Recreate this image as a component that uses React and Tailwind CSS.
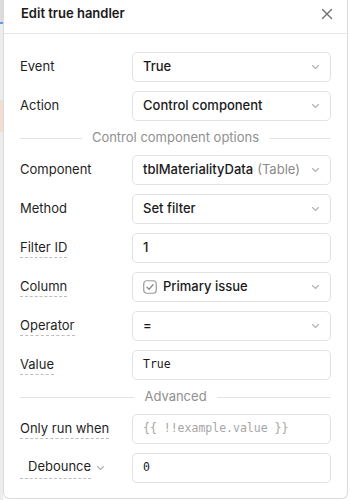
const font = { fontFamily: 'Inter, "Noto Sans", sans-serif' };

function Chevron({ className = '' }) {
  return (
    <svg width="9" height="6" viewBox="0 0 9 6" className={className}>
      <path d="M1.5 1.5 L4.5 4.5 L7.5 1.5" fill="none" stroke="#b3b3b3" strokeWidth="1.1" strokeLinecap="round" strokeLinejoin="round" />
    </svg>
  );
}

function Label({ children, dashed }) {
  return (
    <div className="w-[112px] shrink-0 text-[13px] text-[#1f1f1f]">
      <span className={dashed ? 'border-b border-dashed border-[#bdbdbd] pb-[2px]' : ''}>{children}</span>
    </div>
  );
}

function Select({ children }) {
  return (
    <div className="flex-1 h-[30px] flex items-center justify-between pl-[10px] pr-[10px] rounded-[5px] border border-[#e2e2e2] bg-white text-[13px] font-medium text-[#1a1a1a]">
      <div className="flex items-center whitespace-nowrap">{children}</div>
      <Chevron />
    </div>
  );
}

function Input({ children, mono, placeholder }) {
  return (
    <div
      className={
        'flex-1 h-[30px] flex items-center pl-[10px] rounded-[5px] border border-[#e2e2e2] bg-white ' +
        (mono ? 'text-[11.5px] ' : 'text-[13px] font-medium ') +
        (placeholder ? 'text-[#a6a6a6]' : 'text-[#1a1a1a]')
      }
      style={mono ? { fontFamily: '"DejaVu Sans Mono", monospace' } : undefined}
    >
      {children}
    </div>
  );
}

function Row({ label, dashed, children }) {
  return (
    <div className="flex items-center">
      <Label dashed={dashed}>{label}</Label>
      {children}
    </div>
  );
}

function Divider({ text }) {
  return (
    <div className="h-[16px] flex items-center gap-[10px]">
      <div className="flex-1 h-px bg-[#e3e3e3]" />
      <span className="text-[13px] text-[#8f8f8f]">{text}</span>
      <div className="flex-1 h-px bg-[#e3e3e3]" />
    </div>
  );
}

export default function App() {
  return (
    <div className="w-[350px] h-[500px] flex bg-white overflow-hidden" style={font}>
      <div className="w-[3px] shrink-0 flex flex-col bg-[#ededed]">
        <div className="h-[22px] bg-[#dcdcdc]" />
        <div className="h-[2px] bg-[#5b9bf0]" />
        <div className="h-[76px]" />
        <div className="h-[32px] bg-[#f3ddd0]" />
        <div className="flex-1" />
      </div>
      <div className="w-[345px] shrink-0 h-[499px] flex flex-col bg-white border-l border-r border-b border-[#dadada] rounded-b-[6px]">
        <div className="h-[34px] flex items-center justify-between pl-[17px] pr-[14px] pb-[5px] border-b border-[#e6e6e6]">
          <span className="text-[13px] font-semibold text-[#1a1a1a]">Edit true handler</span>
          <svg width="12" height="12" viewBox="0 0 12 12">
            <path d="M1.5 1.5 L10.5 10.5 M10.5 1.5 L1.5 10.5" stroke="#6f6f6f" strokeWidth="1.4" strokeLinecap="round" />
          </svg>
        </div>
        <div className="flex flex-col gap-[9px] pt-[18px] px-[16px]">
          <Row label="Event">
            <Select>True</Select>
          </Row>
          <Row label="Action">
            <Select>Control component</Select>
          </Row>
          <Divider text="Control component options" />
          <Row label="Component">
            <Select>
              tblMaterialityData<span className="ml-[4px] font-normal text-[#8a8a8a]">(Table)</span>
            </Select>
          </Row>
          <Row label="Method">
            <Select>Set filter</Select>
          </Row>
          <Row label="Filter ID" dashed>
            <Input>1</Input>
          </Row>
          <Row label="Column" dashed>
            <Select>
              <svg width="14" height="14" viewBox="0 0 14 14" className="mr-[6px]">
                <rect x="0.75" y="0.75" width="12.5" height="12.5" rx="3" fill="white" stroke="#9a9a9a" strokeWidth="1.2" />
                <path d="M4 7.2 L6.1 9.2 L10 4.8" fill="none" stroke="#8a8a8a" strokeWidth="1.3" strokeLinecap="round" strokeLinejoin="round" />
              </svg>
              Primary issue
            </Select>
          </Row>
          <Row label="Operator" dashed>
            <Select>=</Select>
          </Row>
          <Row label="Value" dashed>
            <Input mono>True</Input>
          </Row>
          <Divider text="Advanced" />
          <Row label="Only run when" dashed>
            <Input mono placeholder>{'{{ !!example.value }}'}</Input>
          </Row>
          <div className="flex items-center">
            <div className="w-[112px] shrink-0 flex items-center text-[13px] text-[#1f1f1f]">
              <span className="pl-[8px] border-b border-dashed border-[#bdbdbd] pb-[2px]">Debounce</span>
              <Chevron className="ml-[5px]" />
            </div>
            <Input mono>0</Input>
          </div>
        </div>
      </div>
      <div className="flex-1 bg-white" />
    </div>
  );
}
